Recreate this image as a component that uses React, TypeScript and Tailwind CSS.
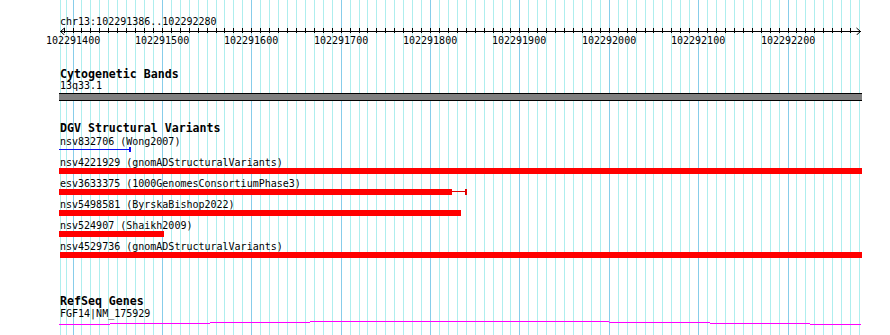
import React from "react";

const gx = (k: number) => Math.floor(73 + k * 8.9375);

const majors = [0, 10, 20, 30, 40, 50, 60, 70, 80];

function Grid() {
  const rects: React.ReactNode[] = [];
  rects.push(<rect key="b0" x={60} y={0} width={1} height={335} fill="#aeeeee" />);
  rects.push(<rect key="b1" x={66} y={0} width={1} height={335} fill="#aeeeee" />);
  for (let k = 0; k <= 88; k++) {
    const major = k % 10 === 0;
    rects.push(
      <rect
        key={k}
        x={k === 88 ? 859 : gx(k)}
        y={0}
        width={1}
        height={335}
        fill={major ? "#87cdea" : "#aeeeee"}
      />
    );
  }
  return (
    <svg className="absolute left-0 top-0" width={890} height={335} shapeRendering="crispEdges">
      {rects}
    </svg>
  );
}

function Ruler() {
  const ticks: React.ReactNode[] = [];
  for (let k = -1; k <= 87; k++) {
    ticks.push(<rect key={k} x={gx(k)} y={1} width={1} height={5} fill="#000" />);
  }
  return (
    <svg className="block" width={890} height={8}>
      <g shapeRendering="crispEdges">
        <rect x={60} y={4} width={801} height={1} fill="#000" />
        {ticks}
      </g>
      <polyline points="64.5,1 60.5,4.5 64.5,8" fill="none" stroke="#000" strokeWidth={1} />
      <polyline points="856.5,1 860.5,4.5 856.5,8" fill="none" stroke="#000" strokeWidth={1} />
    </svg>
  );
}

type Row = {
  label: string;
  left: number;
  width: number;
  tail?: boolean;
};

const rows: Row[] = [
  { label: "nsv4221929 (gnomADStructuralVariants)", left: 59, width: 803 },
  { label: "esv3633375 (1000GenomesConsortiumPhase3)", left: 59, width: 393, tail: true },
  { label: "nsv5498581 (ByrskaBishop2022)", left: 59, width: 402 },
  { label: "nsv524907 (Shaikh2009)", left: 59, width: 105 },
  { label: "nsv4529736 (gnomADStructuralVariants)", left: 60, width: 802 },
];

function GeneLine() {
  const segs: [number, number, number][] = [
    [59, 110, 5],
    [110, 210, 4],
    [210, 310, 3],
    [310, 609, 2],
    [609, 710, 3],
    [710, 810, 4],
    [810, 861, 5],
  ];
  return (
    <svg className="block" width={890} height={6} shapeRendering="crispEdges">
      {segs.map(([a, b, y], i) => (
        <rect key={i} x={a} y={y} width={b - a} height={1} fill="#ff00ff" />
      ))}
    </svg>
  );
}

export default function App() {
  return (
    <div className="relative h-[335px] w-[890px] overflow-hidden bg-white text-black font-['DejaVu_Sans_Mono','Liberation_Mono',monospace]">
      <Grid />
      <div className="relative pt-[17px]">
        <div className="ml-[60px] h-[10px] whitespace-nowrap text-[10px] leading-[10px]">
          chr13:102291386..102292280
        </div>
        <Ruler />
        <div className="relative mt-[1px] h-[10px] text-[10px] leading-[10px]">
          {majors.map((k) => (
            <span
              key={k}
              className="absolute top-0 whitespace-nowrap"
              style={{ left: gx(k) - 27 }}
            >
              {102291400 + k * 10}
            </span>
          ))}
        </div>

        <div className="ml-[60px] mt-[22px] h-[12px] whitespace-nowrap text-[11.6px] font-bold leading-[12px]">
          Cytogenetic Bands
        </div>
        <div className="ml-[60px] mt-[1px] h-[10px] text-[10px] leading-[10px]">13q33.1</div>
        <div className="ml-[59px] mt-[2px] h-[8px] w-[803px] border-y border-black bg-[#808080]" />

        <div className="ml-[60px] mt-[21px] h-[12px] whitespace-nowrap text-[11.6px] font-bold leading-[12px]">
          DGV Structural Variants
        </div>
        <div className="mt-[2px] ml-[60px] h-[11px] whitespace-nowrap text-[10px] leading-[11px]">
          nsv832706 (Wong2007)
        </div>
        <div className="flex h-[5px] items-start">
          <div className="ml-[59px] mt-[2px] h-[1px] w-[70px] bg-[#1010f0]" />
          <div className="h-[5px] w-[2px] bg-[#1010f0]" />
        </div>
        <div className="mt-[5px]">
          {rows.map((r) => (
            <div key={r.label} className="h-[21px]">
              <div className="ml-[60px] h-[11px] whitespace-nowrap text-[10px] leading-[11px]">
                {r.label}
              </div>
              <div className="flex h-[6px] items-start">
                <div className="h-[6px] bg-[#ff0000]" style={{ marginLeft: r.left, width: r.width }} />
                {r.tail && (
                  <>
                    <div className="mt-[2px] h-[1px] w-[13px] bg-[#e00000]" />
                    <div className="h-[6px] w-[2px] bg-[#e00000]" />
                  </>
                )}
              </div>
            </div>
          ))}
        </div>

        <div className="ml-[60px] mt-[33px] h-[12px] whitespace-nowrap text-[11.6px] font-bold leading-[12px]">
          RefSeq Genes
        </div>
        <div className="ml-[60px] mt-[1px] h-[11px] whitespace-nowrap text-[10px] leading-[11px]">
          FGF14|NM_175929
        </div>
        <GeneLine />
      </div>
    </div>
  );
}
